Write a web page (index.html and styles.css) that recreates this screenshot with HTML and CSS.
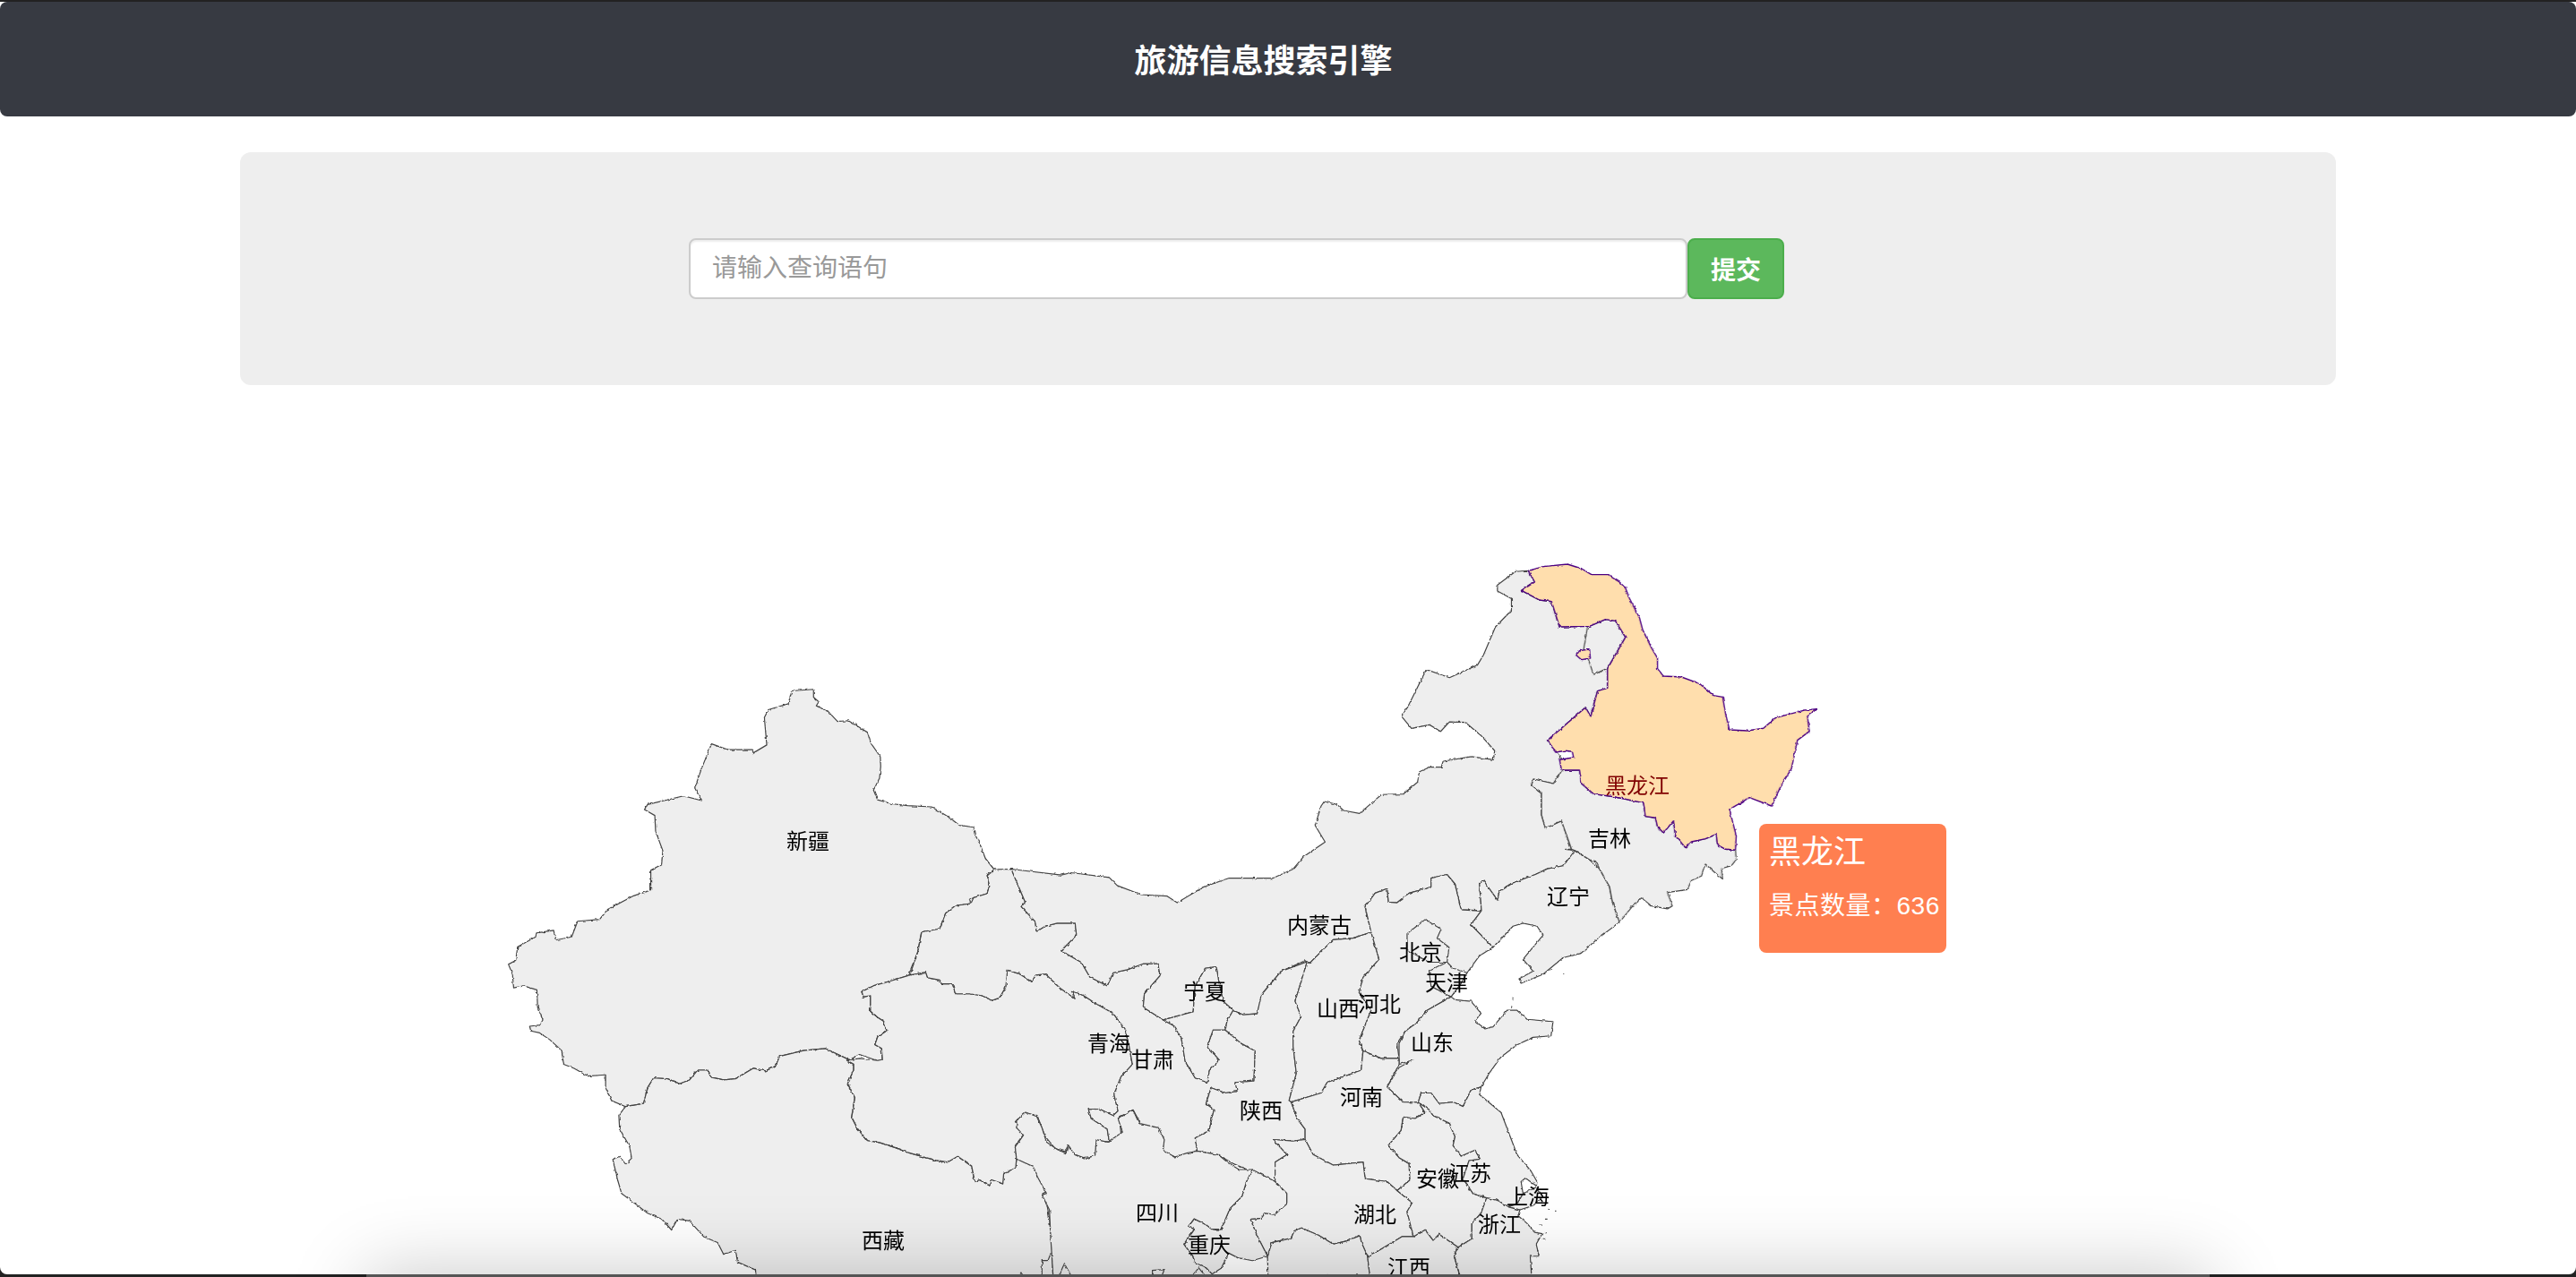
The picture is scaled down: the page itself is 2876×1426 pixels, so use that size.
FILE: index.html
```html
<!DOCTYPE html>
<html lang="zh-CN">
<head>
    <meta charset="UTF-8">
    <meta name="viewport" content="width=device-width, initial-scale=1.0">
    <title>旅游信息搜索引擎</title>
    <link rel="stylesheet" href="styles.css">
</head>
<body>
    <div class="page">
        <header class="navbar">
            <h1 class="brand">旅游信息搜索引擎</h1>
        </header>

        <section class="jumbotron">
            <form class="search">
                <input class="search-input" type="text" placeholder="请输入查询语句">
                <button class="search-btn" type="button">提交</button>
            </form>
        </section>

        <section class="map">
            <svg class="china" width="2876" height="993" viewBox="0 430 2876 993">
                <defs>
                    <filter id="rough" filterUnits="userSpaceOnUse" x="0" y="430" width="2876" height="993">
                        <feTurbulence type="fractalNoise" baseFrequency="0.22" numOctaves="2" seed="4"/>
                        <feDisplacementMap in="SourceGraphic" scale="3" xChannelSelector="R" yChannelSelector="G"/>
                    </filter>
                </defs>

                <g filter="url(#rough)">
                    <!-- west -->
                    <g transform="translate(540 740) scale(.4464 .4375)">
                        <polygon class="prov" points="770,72 825,68 825,88 838,100 832,110 862,125 885,150 912,148 940,165 960,178 968,205 992,240 993,265 990,295 975,325 985,350 1020,360 1060,365 1120,368 1160,392 1190,415 1225,420 1228,437 1240,460 1255,500 1277,528 1258,545 1265,570 1258,590 1225,600 1215,605 1218,615 1180,620 1155,640 1140,680 1095,687 1085,740 1065,790 1065,798 1010,815 975,825 945,840 950,853 967,850 967,890 985,905 1000,915 1008,940 985,955 978,975 995,985 997,1013 985,1016 940,1000 915,1014 855,985 800,990 740,1005 730,1030 705,1042 675,1035 630,1062 600,1065 568,1058 560,1040 535,1040 515,1065 490,1075 460,1062 425,1060 410,1085 400,1125 355,1133 320,1118 305,1085 305,1052 260,1055 225,1035 200,1025 195,990 165,962 140,945 118,940 115,928 140,925 148,912 135,880 133,835 100,825 75,830 72,795 62,770 80,760 85,725 130,700 132,690 175,683 180,708 220,700 235,660 290,655 310,630 375,595 418,580 418,530 445,515 448,480 430,430 428,390 402,375 410,362 500,340 545,352 528,320 545,270 570,207 610,222 670,222 675,230 708,210 702,140 712,120 762,105"/>
                        <polygon class="prov" points="915,1014 855,985 800,990 740,1005 730,1030 705,1042 675,1035 630,1062 600,1065 568,1058 560,1040 535,1040 515,1065 490,1075 460,1062 425,1060 410,1085 400,1125 355,1133 338,1155 340,1190 365,1235 370,1265 355,1280 340,1260 323,1268 335,1320 345,1355 375,1378 410,1405 445,1420 470,1448 485,1420 515,1425 550,1465 585,1480 600,1510 630,1500 635,1530 680,1550 683,1600 1425,1600 1422,1505 1415,1420 1410,1390 1398,1355 1408,1350 1390,1315 1370,1280 1333,1266 1330,1290 1300,1305 1298,1330 1270,1320 1265,1335 1240,1320 1228,1325 1220,1285 1185,1260 1160,1275 1130,1270 1060,1250 1030,1238 990,1225 960,1220 935,1190 920,1160 928,1110 910,1075 925,1040 925,1025 908,1015"/>
                    </g>

                    <!-- middle and east -->
                    <g transform="translate(1100 900) scale(.4464 .3356)">
                        <!-- 青海 -->
                        <polygon class="prov" points="-309,618 -279,598 -244,585 -189,563 -149,553 -144,572 -114,579 -109,592 -82,592 -74,625 -39,625 -9,631 18,647 36,638 51,602 56,546 86,559 116,585 126,563 151,559 186,605 224,641 216,615 246,631 276,657 320,690 350,745 360,800 368,860 340,900 322,960 332,1015 320,1030 285,1008 258,1010 265,1040 305,1075 310,1118 280,1115 275,1165 245,1170 225,1160 205,1135 200,1150 175,1140 150,1100 130,1030 100,1022 75,1050 95,1095 75,1130 78,1175 76,1205 46,1224 44,1257 16,1244 11,1263 -14,1244 -26,1250 -34,1198 -69,1166 -94,1185 -124,1179 -194,1153 -224,1137 -264,1120 -294,1113 -319,1074 -334,1035 -326,970 -344,924 -329,879 -329,859 -346,846 -314,840 -269,847 -257,844 -259,807 -276,794 -269,768 -246,748 -254,716 -269,703 -287,683 -287,631 -304,635"/>
                        <!-- 甘肃 -->
                        <polygon class="prov" points="23,211 65,210 100,320 90,335 125,385 128,418 150,400 180,390 225,390 228,430 190,482 240,520 262,570 305,598 320,555 355,545 395,525 432,525 437,565 398,625 395,670 445,712 470,730 490,770 500,850 525,905 555,920 560,880 585,845 555,800 570,745 600,745 640,790 675,815 672,915 625,920 630,950 600,955 565,938 552,990 572,1010 560,1080 525,1105 530,1145 505,1165 480,1170 445,1155 445,1100 390,1060 370,1012 335,1035 340,1095 310,1118 305,1075 265,1040 258,1010 285,1008 320,1030 332,1015 322,960 340,900 368,860 360,800 350,745 320,690 276,657 246,631 216,615 224,641 186,605 151,559 126,563 116,585 86,559 56,546 51,602 36,638 18,647 -9,631 -39,625 -74,625 -82,592 -109,592 -114,579 -144,572 -149,553 -189,563 -169,488 -159,419 -114,409 -99,357 -74,331 -36,325 -29,305 4,292 11,266 4,233"/>
                        <!-- 内蒙古 -->
                        <polygon class="prov" points="65,210 190,230 215,222 310,238 330,265 390,295 455,300 480,322 545,270 610,240 720,240 770,210 795,170 850,120 825,65 840,0 848,-15 880,-5 896,15 936,25 991,-38 1046,-40 1081,-79 1086,-114 1111,-129 1141,-129 1146,-149 1216,-164 1271,-154 1274,-184 1241,-233 1201,-278 1161,-280 1139,-248 1111,-270 1066,-258 1041,-298 1056,-328 1103,-454 1161,-427 1231,-469 1246,-502 1276,-596 1316,-651 1316,-690 1281,-715 1281,-735 1326,-780 1358,-783 1374,-745 1341,-717 1386,-685 1416,-680 1436,-596 1511,-598 1551,-621 1576,-616 1601,-561 1556,-457 1556,-392 1531,-382 1514,-298 1501,-328 1406,-218 1441,-159 1441,-119 1451,-114 1436,-104 1421,-74 1371,-89 1366,-69 1391,-45 1391,29 1401,74 1441,49 1466,144 1451,144 1476,149 1474,174 1446,199 1406,209 1376,228 1316,258 1286,283 1281,313 1246,248 1236,258 1241,348 1190,345 1175,260 1155,228 1115,240 1115,270 1060,290 1030,322 1008,320 1005,275 975,290 950,335 965,420 920,440 870,445 855,465 810,525 800,515 740,550 695,620 680,690 645,695 620,680 595,650 585,590 578,535 550,540 525,600 520,685 445,712 395,670 398,625 437,565 432,525 395,525 355,545 320,555 305,598 262,570 240,520 190,482 228,430 225,390 180,390 150,400 128,418 125,385 90,335 100,320"/>
                        <!-- 宁夏 -->
                        <polygon class="prov" points="445,712 520,685 525,600 550,540 578,535 585,590 595,650 620,680 605,715 600,745 570,745 555,800 585,845 560,880 555,920 525,905 500,850 490,770 470,730"/>
                        <!-- 陕西 -->
                        <polygon class="prov" points="620,680 645,695 680,692 690,630 740,550 805,518 775,650 790,700 770,750 770,800 778,890 760,980 765,985 780,1040 800,1075 800,1110 770,1115 720,1110 755,1160 725,1185 725,1250 680,1220 655,1210 620,1190 580,1160 530,1148 525,1105 560,1080 572,1010 552,990 565,938 600,955 630,950 625,920 672,915 675,815 640,790 600,745 605,715"/>
                        <!-- 山西 -->
                        <polygon class="prov" points="805,518 810,525 855,465 870,445 920,440 965,420 985,510 945,570 935,620 965,680 935,780 945,815 940,880 855,920 840,955 765,985 760,980 778,890 770,800 770,750 790,700 775,650"/>
                        <!-- 河北 北京 天津 -->
                        <polygon class="prov" points="965,420 950,335 975,290 1005,275 1008,320 1030,322 1060,290 1115,270 1115,240 1155,228 1175,260 1190,345 1240,350 1215,395 1270,470 1235,500 1205,555 1190,590 1165,635 1105,680 1080,720 1050,750 1030,790 1035,840 990,840 945,815 935,780 965,680 935,620 945,570 985,510"/>
                        <polygon class="prov" points="1100,378 1140,410 1130,440 1160,470 1155,520 1110,520 1090,505 1055,480 1055,425"/>
                        <polygon class="prov" points="1155,520 1170,540 1205,555 1190,590 1165,635 1115,600 1110,550"/>
                        <!-- 山东 -->
                        <polygon class="prov" points="1165,635 1175,645 1215,650 1240,690 1225,715 1250,742 1270,735 1305,680 1330,680 1355,710 1420,718 1415,765 1370,770 1330,795 1290,835 1260,890 1240,935 1215,945 1195,1000 1170,985 1135,990 1115,955 1090,955 1083,986 1045,985 1005,935 1035,870 1070,845 1035,860 1035,790 1050,750 1080,720 1105,680"/>
                        <!-- 河南 -->
                        <polygon class="prov" points="945,815 990,840 1035,840 1035,860 1005,935 1045,985 1083,986 1100,1020 1075,1040 1045,1035 1040,1080 1008,1130 1035,1170 1060,1190 1062,1245 1030,1280 1005,1250 950,1240 945,1185 870,1195 820,1160 800,1110 800,1075 780,1040 765,985 840,955 855,920 940,880"/>
                        <!-- 湖北 -->
                        <polygon class="prov" points="800,1110 820,1160 870,1195 945,1185 950,1240 1005,1250 1030,1280 1068,1320 1055,1350 1071,1433 1042,1433 986,1478 956,1498 941,1453 937,1430 903,1448 870,1458 833,1428 791,1404 773,1414 765,1438 717,1453 706,1498 680,1430 663,1375 690,1372 700,1355 724,1359 754,1324 754,1289 725,1250 725,1185 755,1160 720,1110 770,1115"/>
                        <!-- 重庆 -->
                        <polygon class="prov" points="668,1210 725,1250 754,1289 754,1324 724,1359 700,1355 690,1372 663,1375 680,1430 706,1498 668,1513 631,1503 609,1488 590,1538 567,1558 553,1538 523,1518 519,1498 497,1458 523,1409 508,1399 523,1374 553,1394 567,1409 590,1409 612,1339 642,1299 653,1250"/>
                        <!-- 湖南 江西 -->
                        <polygon class="prov" points="706,1498 717,1453 765,1438 773,1414 791,1404 833,1428 870,1458 903,1448 937,1430 941,1453 956,1498 965,1600 708,1600"/>
                        <polygon class="prov" points="1071,1433 1100,1410 1120,1445 1135,1425 1183,1468 1172,1495 1195,1600 965,1600 956,1498 986,1478 1042,1433"/>
                        <!-- 安徽 -->
                        <polygon class="prov" points="1083,986 1100,1020 1075,1040 1045,1035 1040,1080 1008,1130 1035,1170 1060,1190 1062,1245 1030,1280 1068,1320 1055,1350 1071,1433 1100,1410 1120,1445 1135,1425 1183,1468 1217,1440 1217,1390 1240,1355 1254,1304 1220,1290 1195,1240 1210,1180 1238,1175 1225,1145 1190,1165 1170,1130 1175,1100 1160,1055 1120,1030 1110,1010"/>
                        <!-- 江苏 上海 -->
                        <polygon class="prov" points="1240,935 1236,960 1290,1020 1330,1160 1365,1215 1380,1250 1378,1264 1351,1238 1340,1250 1345,1290 1330,1325 1307,1334 1284,1314 1254,1304 1220,1290 1195,1240 1210,1180 1238,1175 1225,1145 1190,1165 1170,1130 1175,1100 1160,1055 1120,1030 1110,1010 1083,986 1090,955 1115,955 1135,990 1170,985 1195,1000 1215,945"/>
                        <polygon class="prov" points="1378,1268 1395,1300 1370,1330 1337,1344 1307,1334 1330,1325 1345,1290"/>
                        <!-- 浙江 福建 -->
                        <polygon class="prov" points="1254,1304 1284,1314 1307,1334 1337,1344 1333,1364 1355,1389 1374,1419 1393,1423 1378,1458 1385,1498 1363,1498 1366,1558 1360,1600 1196,1600 1172,1495 1183,1468 1217,1440 1217,1390 1240,1355"/>
                        <!-- 辽宁 -->
                        <polygon class="prov" points="1474,149 1511,179 1536,209 1561,268 1568,318 1586,387 1536,437 1490,490 1445,505 1395,560 1340,590 1335,575 1370,550 1345,510 1395,430 1380,400 1345,390 1320,400 1270,470 1215,395 1241,348 1236,258 1246,248 1281,313 1286,283 1316,258 1376,228 1406,209 1446,199"/>
                        <!-- 海岛 -->
                        <path class="isle" d="M1410,545h6M1445,560h3M1320,640v6M1315,668h3M1425,1348h3M1408,1345h4M1400,1375h6M1385,1395h8M1400,1420h4M1395,1440h6M1380,1480h3"/>
                    </g>

                    <!-- 四川 and the cut-off southern borders -->
                    <g transform="translate(1000 1226) scale(.3333)">
                        <polygon class="prov" points="405,205 400,165 428,125 405,100 405,75 435,48 472,62 490,100 505,148 540,172 570,185 578,158 600,190 635,205 668,192 672,140 710,148 760,115 745,70 795,40 815,85 880,100 900,140 895,175 935,198 975,185 1010,178 1080,190 1110,215 1150,240 1195,240 1175,280 1160,330 1120,370 1090,440 1060,440 1040,425 1000,405 980,430 1000,440 965,490 995,530 1000,550 1040,570 1060,590 1060,640 540,640 527,590 520,480 515,375 490,325 505,320 475,265 460,230"/>
                        <path class="border" d="M490,600V545L510,545 520,520M545,600 565,555 590,600M860,600V578L900,575 890,600M990,600 1015,570 1040,600M410,600 420,585 430,600"/>
                    </g>

                    <!-- north-east -->
                    <g transform="translate(1500 600) scale(.4464 .3333)">
                        <polygon class="prov" points="545,782 590,780 595,825 625,860 680,870 750,890 755,935 780,940 785,970 800,990 825,950 830,1000 855,1040 870,1020 905,1010 932,995 935,1030 955,1045 980,1048 982,1080 970,1100 945,1110 948,1145 930,1125 905,1095 895,1135 870,1150 860,1180 810,1190 822,1235 810,1245 770,1235 745,1208 720,1240 690,1290 672,1220 665,1170 640,1110 630,1085 615,1080 580,1050 570,1045 545,950 505,975 495,930 495,855 470,830 475,810 525,825 540,795"/>
                        <path class="border" d="M610,300 600,378M612,408 625,460 658,440"/>
                        <polygon class="active" points="462,112 500,98 560,90 595,105 620,125 660,125 690,150 705,170 715,205 740,270 748,310 770,370 785,405 785,440 800,465 845,468 890,490 925,530 948,535 955,590 965,645 1010,648 1050,640 1080,605 1150,580 1183,575 1160,600 1165,650 1135,680 1120,775 1095,830 1070,900 1015,872 965,912 982,1000 980,1048 955,1045 935,1030 932,995 905,1010 870,1020 855,1040 830,1000 825,950 800,990 785,970 780,940 755,935 750,890 680,870 625,860 595,825 590,780 545,780 540,745 575,738 572,718 555,715 530,720 510,680 605,570 618,600 635,515 660,505 660,440 705,335 680,280 655,275 615,298 540,300 520,215 490,210 445,178 478,150"/>
                        <polygon class="active" points="590,380 615,375 617,405 595,410 582,395"/>
                    </g>
                </g>

                <g class="labels">
                    <text x="902" y="939">新疆</text>
                    <text x="986" y="1385">西藏</text>
                    <text x="1238" y="1165">青海</text>
                    <text x="1287" y="1183">甘肃</text>
                    <text x="1345" y="1107">宁夏</text>
                    <text x="1473" y="1033">内蒙古</text>
                    <text x="1586" y="1063">北京</text>
                    <text x="1615" y="1097">天津</text>
                    <text x="1540" y="1121">河北</text>
                    <text x="1494" y="1126">山西</text>
                    <text x="1599" y="1164">山东</text>
                    <text x="1520" y="1225">河南</text>
                    <text x="1408" y="1240">陕西</text>
                    <text x="1641" y="1310">江苏</text>
                    <text x="1605" y="1316">安徽</text>
                    <text x="1706" y="1336">上海</text>
                    <text x="1292" y="1354">四川</text>
                    <text x="1535" y="1356">湖北</text>
                    <text x="1674" y="1367">浙江</text>
                    <text x="1350" y="1390">重庆</text>
                    <text x="1573" y="1415">江西</text>
                    <text x="1503" y="1434">湖南</text>
                    <text x="1751" y="1001">辽宁</text>
                    <text x="1797" y="936">吉林</text>
                    <text class="label-active" x="1828" y="877">黑龙江</text>
                </g>
            </svg>

            <div class="tooltip">
                <div class="tooltip-title">黑龙江</div>
                <div class="tooltip-row">景点数量：636</div>
            </div>
        </section>
    </div>

    <div class="panel-clip">
        <div class="result-panel"></div>
    </div>
</body>
</html>
```

FILE: styles.css
```css
html, body{margin: 0; padding: 0;}
body{
    position: relative;
    height: 100vh;
    padding-top: 2px;
    box-sizing: border-box;
    overflow: hidden;
    background-color: #222;
    font-family: "Liberation Sans", "Noto Sans CJK SC", sans-serif;
}

.page{
    display: flex;
    flex-direction: column;
    height: 1421px;
    background-color: #fff;
    border-radius: 0 0 8px 8px;
}

.navbar{
    flex: none;
    display: flex;
    align-items: center;
    justify-content: center;
    height: 128px;
    padding: 0 55px 3px 0;
    box-sizing: border-box;
    background-color: #373a42;
    border-radius: 8px;
}
.brand{
    margin: 0;
    color: #fff;
    font-size: 36px;
    font-weight: 700;
}

.jumbotron{
    flex: none;
    display: flex;
    align-items: center;
    height: 260px;
    margin: 40px 268px 0;
    padding-left: 501px;
    background-color: #eee;
    border-radius: 12px;
}
.search{display: flex;}
.search-input{
    width: 1115px;
    height: 68px;
    padding: 0 24px;
    box-sizing: border-box;
    background-color: #fff;
    border: 2px solid #ccc;
    border-radius: 8px;
    box-shadow: inset 0 2px 2px rgba(0, 0, 0, .075);
    font-family: inherit;
    font-size: 28px;
}
.search-input::placeholder{color: #999; opacity: 1;}
.search-btn{
    width: 108px;
    height: 68px;
    padding: 0;
    background-color: #5cb85c;
    border: 2px solid #4cae4c;
    border-radius: 8px;
    color: #fff;
    font-family: inherit;
    font-size: 28px;
    font-weight: 700;
}

.map{
    position: relative;
    flex: 1;
    overflow: hidden;
}
.china{display: block;}

.prov{
    fill: #eee;
    stroke: #444;
    stroke-width: 1.2;
    stroke-linejoin: round;
    vector-effect: non-scaling-stroke;
}
.border, .isle{
    fill: none;
    stroke: #444;
    stroke-width: 1.2;
    vector-effect: non-scaling-stroke;
}
.active{
    fill: #ffdead;
    stroke: #4b0082;
    stroke-width: 1.4;
    stroke-linejoin: round;
    vector-effect: non-scaling-stroke;
}

.labels text{
    fill: #000;
    font-size: 24px;
    text-anchor: middle;
    dominant-baseline: central;
}
.labels .label-active{fill: #800000;}

.tooltip{
    position: absolute;
    left: 1964px;
    top: 490px;
    width: 209px;
    height: 144px;
    padding: 12px 11px;
    box-sizing: border-box;
    background-color: #ff7f50;
    border-radius: 8px;
    color: #fff;
}
.tooltip-title{font-size: 36px; line-height: 40px;}
.tooltip-row{margin-top: 20px; font-size: 28px; letter-spacing: .5px; line-height: 40px; white-space: nowrap;}

.panel-clip{
    position: absolute;
    top: 1300px;
    left: 0;
    right: 0;
    height: 126px;
    overflow: hidden;
}
.result-panel{
    width: 2058px;
    height: 300px;
    margin: 123px auto 0;
    background-color: #555;
    box-shadow: 0 0 80px rgba(0, 0, 0, .22);
}
```
